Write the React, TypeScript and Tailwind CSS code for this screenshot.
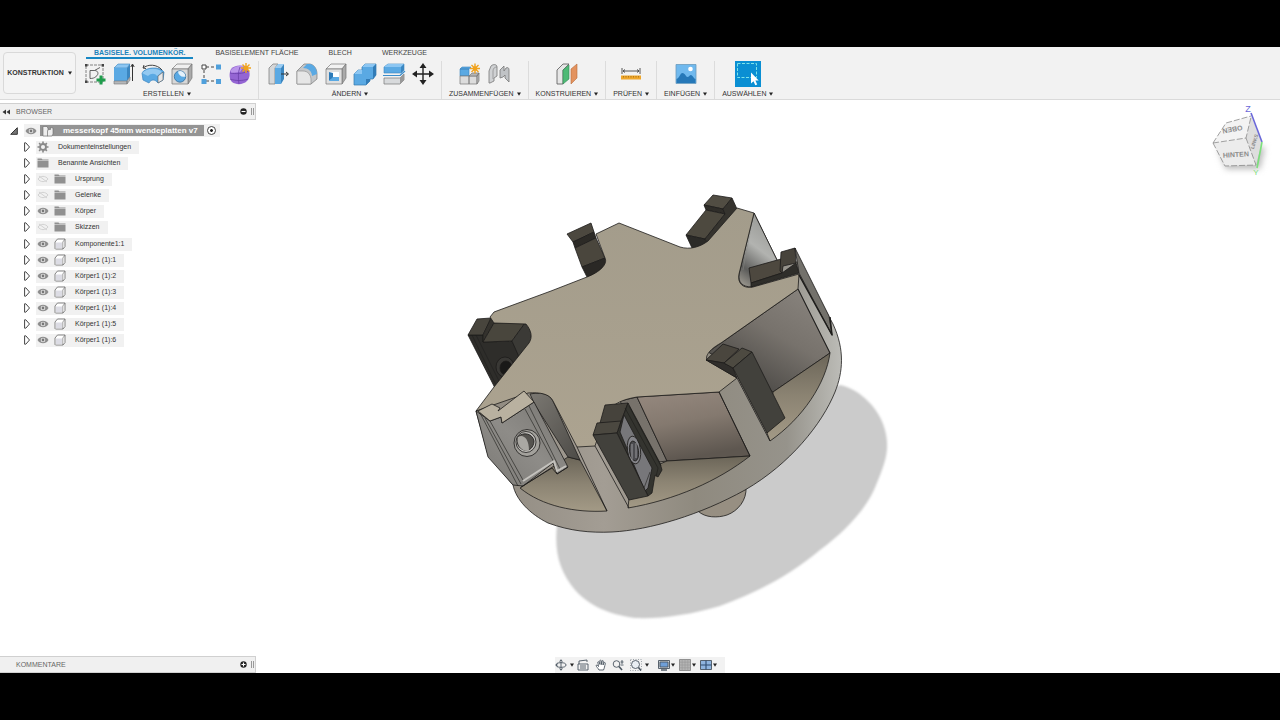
import type { ReactNode } from 'react';

interface ToolGroupProps {
  label: string;
  icons: { name: string; icon: ReactNode }[];
  first?: boolean;
}

type Facet = [points: string, fill: string];

const Caret = () => (
  <svg className="w-1 h-1 shrink-0" viewBox="0 0 4 4" fill="#222">
    <path d="M0 .4h4L2 3.8z" />
  </svg>
);

const Icon = ({ children }: { children: ReactNode }) => (
  <svg className="w-6 h-6" viewBox="0 0 24 24" fill="none" strokeLinejoin="round">
    {children}
  </svg>
);

const Spark = ({ x, y }: { x: number; y: number }) => (
  <g transform={`translate(${x} ${y})`} stroke="#f0a21c" strokeWidth="1.4">
    <path d="M0-5V5M-5 0H5M-3.5-3.5l7 7M3.5-3.5l-7 7" />
    <circle r="2.2" fill="#f0a21c" stroke="none" />
  </g>
);

const createTools = [
  {
    name: 'Skizze erstellen',
    icon: (
      <Icon>
        <path d="M3 3h17v17H3z" stroke="#666" strokeDasharray="3 1" strokeWidth=".8" />
        <path d="M7 16.500V8.500h4.500c4 0 4.500 4 1.500 6-1.500 1.500-3.500 2-6 2zM11.500 8.500L17 5.500" stroke="#555" strokeWidth=".9" />
        <path d="M2 2h2.500v2.500H2zM18.500 2H21v2.500h-2.500zM2 18.500h2.500V21H2z" fill="#444" />
        <path d="M18 13.500v9M13.500 18h9" stroke="#1f9d4c" strokeWidth="3" />
      </Icon>
    ),
  },
  {
    name: 'Extrusion',
    icon: (
      <Icon>
        <path d="M2 6l4-4h12l-3 4z" fill="#8cc6f2" stroke="#3b84be" strokeWidth=".6" />
        <path d="M2 6h13v13H2z" fill="#5aa9e3" />
        <path d="M15 6l3-4v13l-3 4z" fill="#3b86c0" />
        <path d="M2 19h13v3H2zM15 19l3-4v3l-3 4z" fill="#b5b7b9" stroke="#777" strokeWidth=".6" />
        <path d="M20.500 19V3M18.800 5l1.700-3 1.700 3" stroke="#333" />
      </Icon>
    ),
  },
  {
    name: 'Drehen',
    icon: (
      <Icon>
        <path d="M1 11c3-6 18-7 22-1l-1 8-5 3c-3-4-7-4-9 0l-6-3z" fill="#5aa9e3" stroke="#3b84be" strokeWidth=".7" />
        <path d="M1 11c5-5 15-6 20-1l-5 4c-2-3-6-3-9 0z" fill="#93c9f1" />
        <path d="M17 14l5-4v8l-5 3z" fill="#e8e8e8" stroke="#555" strokeWidth=".6" />
        <path d="M2 6c5-4 14-4 19 2M2 6l1-3M2 6l3 .5" stroke="#444" />
      </Icon>
    ),
  },
  {
    name: 'Bohrung',
    icon: (
      <Icon>
        <path d="M2 7l5-5h15l-4 5z" fill="#f0f0f0" stroke="#777" strokeWidth=".7" />
        <path d="M18 7l4-5v14l-4 6z" fill="#aaa" stroke="#777" strokeWidth=".7" />
        <path d="M2 7h16v15H2z" fill="#d8d8d8" stroke="#777" strokeWidth=".7" />
        <circle cx="10" cy="14.500" r="5.700" fill="#5aa9e3" stroke="#356f9d" strokeWidth=".8" />
        <path d="M8 9.500a5.500 5.500 0 0 1 7.500 5c-4 1-7-1-7.500-5z" fill="#e4f1fb" />
      </Icon>
    ),
  },
  {
    name: 'Muster',
    icon: (
      <Icon>
        <path d="M7 5h10M5 8v9M7 19h10" stroke="#444" strokeDasharray="3 2" />
        <path d="M3 3h4v4H3z" fill="#fff" stroke="#444" />
        <path d="M17 2.500h5v5h-5zM2.500 17h5v5h-5zM17 17h5v5h-5z" fill="#4fa0dc" />
      </Icon>
    ),
  },
  {
    name: 'Form erstellen',
    icon: (
      <Icon>
        <path d="M3 7c3-4 12-5 16-1 4 4 3 10 0 13-4 4-11 4-15 1-3-3-3-9-1-13z" fill="#9465d3" />
        <path d="M3 8c3-4 9-5 13-4l-4 6-9 1z" fill="#ba95ea" />
        <path d="M2 11c6 1 12 1 19-2M12 5c-2 5-2 11-1 17M2 17c6 2 12 2 18 0" stroke="#6a3fa8" strokeWidth=".8" />
        <Spark x={18} y={6} />
      </Icon>
    ),
  },
];

const modifyTools = [
  {
    name: 'Drücken/Ziehen',
    icon: (
      <Icon>
        <path d="M3 6l4-4h5L9 6v16H3z" fill="#d5d7d9" stroke="#777" strokeWidth=".7" />
        <path d="M9 6l3-4h6l-3 4z" fill="#9bcdf3" />
        <path d="M9 6h6v16H9z" fill="#5aa9e3" />
        <path d="M15 6l3-4v15l-3 5z" fill="#3b86c0" />
        <path d="M15 12h7M20 10l2.500 2-2.500 2" stroke="#333" />
      </Icon>
    ),
  },
  {
    name: 'Abrundung',
    icon: (
      <Icon>
        <path d="M2 9l7-7h6c5 1 7 6 7 10v5l-6 5H2z" fill="#c5c7c9" stroke="#777" strokeWidth=".7" />
        <path d="M2 9h6c5 0 8 4 8 9v4H2z" fill="#e6e6e6" stroke="#888" strokeWidth=".6" />
        <path d="M8 6l4-4h3c5 1 7 6 7 10l-5 2c0-5-4-8-9-8z" fill="#5aa9e3" />
      </Icon>
    ),
  },
  {
    name: 'Schale',
    icon: (
      <Icon>
        <path d="M2 7l5-5h15l-4 5z" fill="#f2f2f2" stroke="#777" strokeWidth=".7" />
        <path d="M18 7l4-5v14l-4 6z" fill="#aaa" stroke="#777" strokeWidth=".7" />
        <path d="M2 7h16v15H2z" fill="#e0e0e0" stroke="#777" strokeWidth=".7" />
        <path d="M5 10h10v9H5z" fill="#fff" />
        <path d="M5 10l4 1v5l-4 3z" fill="#2e7bb8" />
        <path d="M5 19l4-4h6v4z" fill="#5aa9e3" />
      </Icon>
    ),
  },
  {
    name: 'Kombinieren',
    icon: (
      <Icon>
        <path d="M9 5l3-3h11v11l-3 4h-3v2l-4 4H1V12l4-4h4z" fill="#5aa9e3" stroke="#3578ae" strokeWidth=".7" />
        <path d="M9 5h11l3-3H12zM1 12h8V8H5z" fill="#8cc6f2" />
        <path d="M20 5l3-3v11l-3 4zM13 17h4v2l-4 4z" fill="#327cb7" />
      </Icon>
    ),
  },
  {
    name: 'Körper teilen',
    icon: (
      <Icon>
        <path d="M2 5l4-3h16v6l-3 3H2z" fill="#5aa9e3" stroke="#3b84be" strokeWidth=".6" />
        <path d="M2 5h17l3-3H6z" fill="#8cc6f2" />
        <path d="M19 5l3-3v6l-3 3z" fill="#3b86c0" />
        <path d="M1 13.500h17l5-4.500" stroke="#3c8dca" strokeWidth="1.200" />
        <path d="M2 16h16l4-4v6l-4 4H2z" fill="#d8dadc" stroke="#777" strokeWidth=".7" />
        <path d="M18 16l4-4v6l-4 4z" fill="#999" />
      </Icon>
    ),
  },
  {
    name: 'Verschieben',
    icon: (
      <Icon>
        <path d="M12 3v18M3 12h18" stroke="#222" strokeWidth="1.400" />
        <path d="M12 1l3.500 5h-7zM12 23l-3.500-5h7zM1 12l5-3.500v7zM23 12l-5 3.500v-7z" fill="#222" />
      </Icon>
    ),
  },
];

const assembleTools = [
  {
    name: 'Neue Komponente',
    icon: (
      <Icon>
        <path d="M2 7l2-2h9l-2 2zM2 7h9v7H2z" fill="#5aa9e3" stroke="#3b84be" strokeWidth=".6" />
        <path d="M2 14h9v8H2zM11 14h8v8h-8z" fill="#dcdcdc" stroke="#777" strokeWidth=".7" />
        <path d="M11 14l3-3h7l-2 3zM19 14l2-3v8l-2 3z" fill="#b5b5b5" stroke="#777" strokeWidth=".7" />
        <Spark x={17} y={6.5} />
      </Icon>
    ),
  },
  {
    name: 'Gelenk',
    icon: (
      <Icon>
        <path d="M2 9l2-5c2-2 6-2 6 1v9l-3 2v3l-4 2H2z" fill="#d0d2d4" stroke="#777" strokeWidth=".8" />
        <path d="M6 9v8M6 9c0-3 2-4 4-4" stroke="#888" strokeWidth=".7" />
        <path d="M13 8l4-4v5l2-3c2-1 3 0 3 2v12l-4-4v-3l-2 2-3 1z" fill="#c0c3c6" stroke="#777" strokeWidth=".8" />
      </Icon>
    ),
  },
];

const constructTools = [
  {
    name: 'Versetzte Ebene',
    icon: (
      <Icon>
        <path d="M2 8l6-6h6L8 8v14H2z" fill="#e6e6e6" stroke="#555" strokeWidth=".8" />
        <path d="M8 8l6-5v14l-6 5z" fill="#4dba75" stroke="#338855" strokeWidth=".6" />
        <path d="M16 7l6-5v14l-6 6z" fill="#e3935f" stroke="#b96c3b" strokeWidth=".6" />
      </Icon>
    ),
  },
];

const inspectTools = [
  {
    name: 'Messen',
    icon: (
      <Icon>
        <path d="M3 6v6M21 6v6M4 9h16M6 7.500L4 9l2 1.500M18 7.500L20 9l-2 1.500" stroke="#444" strokeWidth=".9" />
        <path d="M2 13.500h20v4H2z" fill="#efa72b" />
        <path d="M4.500 14v1.500M7 14v1.500M9.500 14v1.500M12 14v1.500M14.500 14v1.500M17 14v1.500M19.500 14v1.500" stroke="#8c5b08" strokeWidth=".6" />
      </Icon>
    ),
  },
];

const insertTools = [
  {
    name: 'Bild einfügen',
    icon: (
      <Icon>
        <path d="M2 2.500h20v19H2z" fill="#70b9ee" stroke="#6b9abd" strokeWidth=".8" />
        <path d="M2.500 17c3-1 3.500-6 6-6s3.500 4 5 4 2-2 3.500-2 3 4 4.500 4v4h-19z" fill="#2678b8" />
        <circle cx="16.500" cy="7" r="2.300" fill="#fff" />
      </Icon>
    ),
  },
];

const selectTools = [
  {
    name: 'Auswahl',
    icon: (
      <svg className="w-[26px] h-[26px]" viewBox="0 0 26 26" fill="none">
        <path d="M0 0h26v26H0z" fill="#0a8fd3" />
        <path d="M2.500 2.500h19v14h-19z" stroke="#7ce3e8" strokeDasharray="3 1.500" />
        <path d="M16 11.500v11l2.500-2.200 1.800 4 1.900-.9-1.800-3.900h3.300z" fill="#fff" />
      </svg>
    ),
  },
];

function ToolGroup({ label, icons, first }: ToolGroupProps) {
  return (
    <div className={`flex flex-col items-center px-[7px] ${first ? '' : 'border-l border-[#dcdcdc]'}`}>
      <div className="flex -mx-[3px]">
        {icons.map(({ name, icon }) => (
          <button key={name} aria-label={name} className="w-[29px] h-[26px] flex items-center justify-center">
            {icon}
          </button>
        ))}
      </div>
      <button className="flex items-center gap-[3px] pt-0.5 leading-[10px] text-[#333]">
        {label}
        <Caret />
      </button>
    </div>
  );
}

function Toolbar() {
  const tabs = ['BASISELE. VOLUMENKÖR.', 'BASISELEMENT FLÄCHE', 'BLECH', 'WERKZEUGE'];
  return (
    <header className="h-[53px] shrink-0 flex bg-[#f2f2f2] border-b border-[#dadada] text-[7px]">
      <button className="w-[73px] h-[42px] mt-[5px] ml-[3px] shrink-0 flex items-center justify-center gap-1 rounded-sm border border-[#d9d9d9] bg-[#f4f4f4] font-bold text-[#333]">
        KONSTRUKTION
        <Caret />
      </button>
      <div className="flex flex-col">
        <nav className="flex gap-[14px] ml-[10px] h-3">
          {tabs.map((tab, i) => (
            <a
              key={tab}
              href="#"
              className={`px-2 h-3 leading-[11px] border-b-2 ${
                i === 0 ? 'border-[#1787c4] text-[#1b82bb] font-bold' : 'border-transparent text-[#444]'
              }`}
            >
              {tab}
            </a>
          ))}
        </nav>
        <div className="flex mt-0.5">
          <ToolGroup label="ERSTELLEN" icons={createTools} first />
          <ToolGroup label="ÄNDERN" icons={modifyTools} />
          <ToolGroup label="ZUSAMMENFÜGEN" icons={assembleTools} />
          <ToolGroup label="KONSTRUIEREN" icons={constructTools} />
          <ToolGroup label="PRÜFEN" icons={inspectTools} />
          <ToolGroup label="EINFÜGEN" icons={insertTools} />
          <ToolGroup label="AUSWÄHLEN" icons={selectTools} />
        </div>
      </div>
    </header>
  );
}

const Eye = ({ off }: { off?: boolean }) => (
  <svg className="w-3 h-3 shrink-0" viewBox="0 0 12 12" fill="none">
    {off ? (
      <path d="M1 6c2.500-3.500 7.500-3.500 10 0-2.500 3.500-7.500 3.500-10 0zM2 3l8 6" stroke="#d2d2d2" />
    ) : (
      <>
        <path d="M.5 6c2.500-4.300 8.500-4.300 11 0-2.500 4.300-8.500 4.300-11 0z" fill="#8d8d8d" />
        <circle cx="6" cy="6" r="2.300" fill="#e8e8e8" />
        <circle cx="6" cy="6" r="1.400" fill="#777" />
      </>
    )}
  </svg>
);

const Folder = () => (
  <svg className="w-3 h-3 shrink-0" viewBox="0 0 12 12" fill="#909090">
    <path d="M.5 1.500h4l1 1h6v1H.5zM.5 4h11v6.500H.5z" />
  </svg>
);

const Body = () => (
  <svg className="w-3 h-3 shrink-0" viewBox="0 0 12 12" fill="#fff" stroke="#777" strokeWidth=".9" strokeLinejoin="round">
    <path d="M1 4l2.500-3H11v7.500L9 11H1.500L1 10.500z" />
    <path d="M2 4.500h6v5.800H2z" fill="#dcdce4" stroke="none" />
    <path d="M8.800 11V4L11 1" fill="none" strokeWidth=".7" />
  </svg>
);

const Gear = () => (
  <svg className="w-3 h-3 shrink-0" viewBox="0 0 12 12" fill="none" stroke="#888">
    <circle cx="6" cy="6" r="3" strokeWidth="1.900" />
    <path d="M6 .5v2M6 9.500v2M.5 6h2M9.500 6h2M2.100 2.100l1.400 1.400M8.500 8.500l1.400 1.400M9.900 2.100L8.500 3.500M3.500 8.500L2.100 9.900" strokeWidth="1.600" />
  </svg>
);

function TreeRow({ label, icon, visible }: { label: string; icon: ReactNode; visible?: boolean }) {
  return (
    <li className="h-4 flex items-center pl-6">
      <button aria-label={`${label} öffnen`} className="w-3 shrink-0">
        <svg className="w-[6px] h-[10px]" viewBox="0 0 6 10" fill="#fff" stroke="#444">
          <path d="M.6 .8v8.400h1.200L5.500 5 1.800.8z" />
        </svg>
      </button>
      <div className="h-[13px] flex items-center bg-[#f1f1f1] pl-px pr-2">
        {visible !== undefined && (
          <button aria-label={`${label} ein- oder ausblenden`} className="mr-[5px]">
            <Eye off={!visible} />
          </button>
        )}
        {icon}
        <span className="ml-[9px] whitespace-nowrap">{label}</span>
      </div>
    </li>
  );
}

function PanelHeader({ title, collapsed }: { title: string; collapsed?: boolean }) {
  return (
    <div className="h-[17px] flex items-center bg-[#f0f0f0] border border-l-0 border-[#d0d0d0] text-[#666]">
      <span className="w-4 flex justify-start pl-0.5">
        {!collapsed && (
          <svg className="w-2 h-2" viewBox="0 0 8 8" fill="#333">
            <path d="M4 1.500v5L.5 4zM8 1.500v5L4.500 4z" />
          </svg>
        )}
      </span>
      <h2>{title}</h2>
      <button aria-label={`${title} umschalten`} className="ml-auto mr-1">
        <svg className="w-[7px] h-[7px]" viewBox="0 0 7 7">
          <circle cx="3.500" cy="3.500" r="3.200" fill="#222" />
          <path d={collapsed ? 'M1.500 3.500h4M3.500 1.500v4' : 'M1.500 3.500h4'} stroke="#fff" strokeWidth="1.100" />
        </svg>
      </button>
      <span className="w-[3px] h-[7px] mr-px border-l border-r border-[#999]" />
    </div>
  );
}

function BrowserPanel() {
  const bodies = [1, 2, 3, 4, 5, 6];
  return (
    <aside className="[grid-area:1/1] z-10 w-64 flex flex-col text-[7px] leading-[10px] text-[#333] pt-[3px]">
      <PanelHeader title="BROWSER" />
      <div className="h-[17px] mt-[2px] flex items-center pl-[10px]">
        <svg className="w-2 h-2 mr-[6px]" viewBox="0 0 8 8">
          <path d="M.7 7.300h6.600V.7z" fill="#777" stroke="#333" />
        </svg>
        <div className="h-[13px] flex items-center bg-[#f1f1f1] pl-px pr-1">
          <button aria-label="Alles ein- oder ausblenden">
            <Eye />
          </button>
          <div className="h-[11px] ml-[3px] pl-[2px] pr-[6px] flex items-center gap-[9px] bg-[#949494] text-white text-[8px] font-bold whitespace-nowrap">
            <svg className="w-3 h-3" viewBox="0 0 12 12" fill="#eee" stroke="#6a6a6a" strokeWidth=".6">
              <path d="M1 1.500h4l1 2V11H1z" />
              <path d="M5.500 6l1-1.500h2v-2l2.500.5v6L10 11H5.500z" />
            </svg>
            messerkopf 45mm wendeplatten v7
          </div>
          <input type="radio" name="active" aria-label="Komponente aktivieren" defaultChecked className="appearance-none w-[9px] h-[9px] ml-[3px] rounded-full border border-[#444] bg-[radial-gradient(#222_22%,#fff_34%)]" />
        </div>
      </div>
      <ul>
        <TreeRow label="Dokumenteinstellungen" icon={<Gear />} />
        <TreeRow label="Benannte Ansichten" icon={<Folder />} />
        <TreeRow label="Ursprung" icon={<Folder />} visible={false} />
        <TreeRow label="Gelenke" icon={<Folder />} visible={false} />
        <TreeRow label="Körper" icon={<Folder />} visible />
        <TreeRow label="Skizzen" icon={<Folder />} visible={false} />
      </ul>
      <ul className="mt-px">
        <TreeRow label="Komponente1:1" icon={<Body />} visible />
        {bodies.map((n) => (
          <TreeRow key={n} label={`Körper1 (1):${n}`} icon={<Body />} visible />
        ))}
      </ul>
      <div className="mt-auto">
        <PanelHeader title="KOMMENTARE" collapsed />
      </div>
    </aside>
  );
}

const Facets = ({ items }: { items: Facet[] }) => (
  <>
    {items.map(([points, fill]) => (
      <polygon key={points} points={points} fill={fill} />
    ))}
  </>
);

// inserts that sit behind the top face
const rearInserts: Facet[] = [
  ['567,234 591,223 594,232 573,242', '#4c483f'],
  ['573,242 594,232 596,238 575,248', '#2c2a26'],
  ['575,248 596,238 605,258 582,267', '#4a463d'],
  ['582,267 605,258 608,268 588,279', '#2a2825'],
  ['704,205 713,195 732,198 723,209', '#514d43'],
  ['704,205 723,209 725,214 706,210', '#2f2d29'],
  ['706,210 725,214 705,239 686,235', '#4d493f'],
  ['686,235 705,239 709,246 692,248', '#2b2a27'],
  ['723,209 732,198 737,209 709,246 705,239 725,214', '#35332e'],
];

const leftInsert: Facet[] = [
  ['468,335 483,335 483,342 512,341 520,356 496,390', '#2e2d2a'],
  ['468,335 477,319 491,318 483,335', '#48453d'],
  ['483,335 491,318 494,323 483,342', '#34322d'],
  ['483,342 494,323 525,323 512,341', '#49463d'],
  ['512,341 525,323 533,332 533,344 519,357', '#3b3a36'],
];

const rightInsert: Facet[] = [
  ['749,268 781,259 782,273 751,283', '#4d483f'],
  ['751,283 782,273 796,263 799,273 751,287', '#2f2e2a'],
  ['781,252 795,248 796,263 783,266 782,273 780,271', '#47433b'],
  ['795,248 829,316 832,335 799,273', '#73716b'],
];

const lowerRightInsert: Facet[] = [
  ['706,360 723,344 739,349 724,363', '#4a463e'],
  ['706,360 724,363 733,368 737,378', '#302e2b'],
  ['724,363 742,348 752,352 733,368', '#4d4a41'],
  ['733,368 752,352 785,418 767,433', '#42413c'],
];

const frontInsert: Facet[] = [
  ['605,405 628,403 620,424 600,423', '#46433c'],
  ['628,403 660,463 662,470 658,477 655,475 652,493 648,496 617,433', '#34342f'],
  ['624,415 652,468 648,488 645,491 620,432', '#77777a'],
  ['597,423 621,421 617,433 593,435', '#4b4840'],
  ['593,435 617,433 648,496 629,500', '#42413c'],
];

function Model() {
  return (
    <svg className="[grid-area:1/1] w-full h-full min-h-0" viewBox="0 100 1280 573" role="img" aria-label="Messerkopf">
      <defs>
        <filter id="soft" x="-5%" y="-5%" width="110%" height="110%">
          <feGaussianBlur stdDeviation="1" />
        </filter>
        <linearGradient id="top" x1="0" y1="0" x2="0" y2="1">
          <stop offset="0" stopColor="#a39c8b" />
          <stop offset="1" stopColor="#aca390" />
        </linearGradient>
        <linearGradient id="side" x1="0" y1="0" x2="1" y2="0">
          <stop offset="0" stopColor="#8f897f" />
          <stop offset=".35" stopColor="#a39d94" />
          <stop offset=".6" stopColor="#8f8a7f" />
          <stop offset=".85" stopColor="#96938b" />
          <stop offset="1" stopColor="#bcbcb7" />
        </linearGradient>
        <linearGradient id="wallA" x1="0" y1="0" x2=".3" y2="1">
          <stop offset="0" stopColor="#96897f" />
          <stop offset=".5" stopColor="#84796f" />
          <stop offset="1" stopColor="#5e5750" />
        </linearGradient>
        <linearGradient id="wallB" x1="1" y1="0" x2=".3" y2="1">
          <stop offset="0" stopColor="#8c8781" />
          <stop offset=".5" stopColor="#77726c" />
          <stop offset="1" stopColor="#474542" />
        </linearGradient>
        <linearGradient id="wallC" x1=".6" y1="0" x2=".2" y2="1">
          <stop offset="0" stopColor="#969793" />
          <stop offset=".45" stopColor="#b2b3b0" />
          <stop offset=".8" stopColor="#5d5d5b" />
          <stop offset="1" stopColor="#96938b" />
        </linearGradient>
        <linearGradient id="wallD" x1="0" y1="0" x2="1" y2="1">
          <stop offset="0" stopColor="#7b7872" />
          <stop offset="1" stopColor="#4d4b47" />
        </linearGradient>
        <linearGradient id="floor" x1="0" y1="0" x2="0" y2="1">
          <stop offset="0" stopColor="#6b6558" />
          <stop offset=".5" stopColor="#8c8473" />
          <stop offset="1" stopColor="#a39a86" />
        </linearGradient>
        <linearGradient id="plate" x1="0" y1="1" x2="1" y2="0">
          <stop offset="0" stopColor="#7a7874" />
          <stop offset=".5" stopColor="#8e8c88" />
          <stop offset="1" stopColor="#777571" />
        </linearGradient>
      </defs>

      <path
        d="M840 385C862 390 880 410 885 430C890 450 886 462 874 490C864 512 842 534 820 550C790 575 762 590 720 606C690 615 660 619 635 618C607 614 590 606 575 590C560 572 554 553 557 525L700 440z"
        fill="#cbcbcb"
        filter="url(#soft)"
      />

      <g stroke="#1d1c1a" strokeWidth=".8" strokeLinejoin="round">
        <path d="M698 511C705 518 718 518 727 515C738 511 747 500 746 487z" fill="#978f82" />
        <path
          d="M476 411L488 455L513 485C516 500 530 514 548 523C570 531 590 533 612 532C650 530 700 515 745 490C790 464 822 424 835 392C843 372 845 350 833 324L799 262L778 262L754 213L640 300z"
          fill="url(#side)"
        />

        <path d="M754 213L778 262L752 287C742 287 738 282 739 274z" fill="url(#wallC)" />
        <path d="M753 216L743 270" fill="none" stroke="#8a8a87" strokeWidth=".5" />
        <Facets items={rearInserts} />
        <Facets items={leftInsert} />
        <path d="M472 335l24 50M476 335l23 46" fill="none" strokeWidth=".5" />
        <ellipse cx="505" cy="367" rx="9" ry="10" fill="#393835" />
        <ellipse cx="506" cy="368" rx="6" ry="7" fill="#191918" />

        <path d="M520 488L568 457L580 460L607 511C575 513 542 506 520 488z" fill="url(#floor)" />
        <path d="M530 394C545 391 550 396 553 401L580 460L568 457L535 405z" fill="url(#wallD)" />

        <path d="M620 401L637 397L667 461L650 463z" fill="#77726b" />
        <path d="M637 397L719 392L750 456L667 461z" fill="url(#wallA)" />
        <path d="M628 508L629 498L660 464L667 461L750 456C718 481 675 500 628 508z" fill="url(#floor)" />

        <path d="M708 352L721 343L798 289L830 353L773 392L740 370z" fill="url(#wallB)" />
        <path d="M773 392L830 353C826 383 803 418 770 441L767 433z" fill="url(#floor)" />
        <path d="M798 289L830 353M719 392L750 456M737 378L770 441M577 447L607 511M595 446L629 508" fill="none" />

        <path
          d="M494 312L551 291L587 277C600 272 608 264 605 258L596 234L619 223L680 247C690 250 700 247 708 241L737 208L754 213L739 274C737 283 743 289 753 287L799 274L798 289L721 343C708 350 704 358 708 361L737 378L719 392L637 397C620 400 607 405 602 425L595 446L577 447L553 401C550 394 540 392 528 393L476 411L494 387L529 343C533 337 531 330 526 324L494 323L490 317z"
          fill="url(#top)"
        />

        <Facets items={rightInsert} />
        <path d="M799 275L832 335L830 317" fill="none" strokeWidth="1.500" />
        <Facets items={lowerRightInsert} />

        <path d="M476 411L490 421L501 417L502 423L534 402L568 467L557 474L553 463L523 486L513 485L488 457z" fill="url(#plate)" />
        <path d="M478 411L492 404L500 408L498 411L524 391L534 402L502 423L501 417L490 421z" fill="#b9b1a0" />
        <path d="M480 413L518 486M485 418L521 484M490 421L523 480M529 406L560 469M525 409L556 466" fill="none" strokeWidth=".6" />
        <path d="M523 481L554 461L557 471L566 466" fill="none" stroke="#c4c2bd" strokeWidth="2" />
        <path d="M521 487L552 468L557 474L568 467" fill="none" strokeWidth=".8" />
        <ellipse cx="527" cy="443" rx="13" ry="13.500" fill="#a3a19c" />
        <ellipse cx="526" cy="442" rx="10" ry="10.500" fill="#c0beba" />
        <path d="M518 437C523 431 533 434 534 441C534 447 529 452 524 450C518 448 516 443 518 437z" fill="#55534f" />
        <path d="M518 437C523 434 529 438 529 451C521 452 516 444 518 437z" fill="#aaa8a3" stroke="none" />

        <Facets items={frontInsert} />
        <path d="M625 408L658 468L656 477M629 406L661 466M644 488L650 472" fill="none" strokeWidth=".6" />
        <ellipse cx="634" cy="450" rx="6.500" ry="14" fill="#85858a" transform="rotate(-8 634 450)" />
        <ellipse cx="634" cy="451" rx="4.500" ry="10" fill="#4c4c50" transform="rotate(-8 634 451)" />
        <path d="M632 444v16M636 443v15" stroke="#a2a2a4" strokeWidth=".9" />
      </g>
    </svg>
  );
}

function ViewCube() {
  return (
    <svg
      className="[grid-area:1/1] z-10 justify-self-end self-start w-[70px] h-20 mt-px mr-1"
      viewBox="1206 102 70 80"
      fontFamily="Liberation Sans, sans-serif"
      textAnchor="middle"
    >
      <defs>
        <filter id="cubeShadow" x="-30%" y="-30%" width="160%" height="160%">
          <feGaussianBlur stdDeviation="3" />
        </filter>
      </defs>
      <path d="M1218 150l8 20 34 0 5-22z" fill="#bbb" filter="url(#cubeShadow)" />
      <path d="M1213 144L1226 124L1251 117L1246 139z" fill="#f3f3f3" />
      <path d="M1213 144L1246 139L1256 166L1225 167z" fill="#ececec" />
      <path d="M1246 139L1251 117L1262 143L1256 166z" fill="#dedede" />
      <path d="M1213 144L1226 124L1251 117M1213 144L1246 139L1251 118M1213 144L1225 167L1256 166M1246 139L1256 166" fill="none" stroke="#8a8a8a" strokeWidth=".8" strokeDasharray="6 2" />
      <path d="M1251 114L1262 143" stroke="#6a68d8" strokeWidth="1.600" />
      <path d="M1262 143L1257 169" stroke="#7be07b" strokeWidth="1.600" />
      <text x="1248" y="113" fontSize="9" fill="#6a68d8">Z</text>
      <text x="1256" y="176" fontSize="8" fill="#7be07b">Y</text>
      <text fontSize="7" fontWeight="bold" fill="#8b8b8b" transform="translate(1236 158) rotate(-3)">HINTEN</text>
      <text fontSize="7" fontWeight="bold" fill="#8b8b8b" transform="translate(1232 128) rotate(170)">OBEN</text>
      <text fontSize="5" fontWeight="bold" fill="#8b8b8b" transform="translate(1256 143) rotate(-72)">LINKS</text>
    </svg>
  );
}

const NavIcon = ({ children }: { children: ReactNode }) => (
  <svg className="w-3 h-3" viewBox="0 0 12 12" fill="none" stroke="#4a5560" strokeWidth=".9" strokeLinejoin="round">
    {children}
  </svg>
);

const Screen = () => (
  <NavIcon>
    <path d="M.5 1.500h11v8H.5z" fill="#ccd3da" />
    <path d="M2 3h8v5H2z" fill="#6f9fd8" />
    <path d="M3 11h6" strokeWidth="1.400" />
  </NavIcon>
);

function NavBar() {
  return (
    <nav className="[grid-area:1/1] z-10 justify-self-center self-end h-4 w-[170px] flex items-center bg-[#f2f2f2]">
      <button aria-label="Orbit" className="flex items-center gap-[3px] mr-[3px]">
        <NavIcon>
          <ellipse cx="6" cy="6" rx="5" ry="2.300" />
          <path d="M6 .8v10.400M4.500 2.500L6 .8l1.500 1.700M4.500 9.500L6 11.200l1.500-1.700M3 4.500L1 6l2 1.500" />
        </NavIcon>
        <Caret />
      </button>
      <button aria-label="Ansicht von" className="mr-[6px]">
        <NavIcon>
          <path d="M1 5h10v6H1zM2 5V2l8-1v2M3 7h6M3 9h6" />
        </NavIcon>
      </button>
      <button aria-label="Pan" className="mr-[5px]">
        <NavIcon>
          <path d="M4 11C3 9 1.500 8 1 6.500c1-.8 2 .3 2.500 1L2.800 3c.8-.8 1.400 0 1.600.8L5 5.500l-.2-4c.7-.8 1.400 0 1.400.5l.3 3.500.7-3.800c.8-.4 1.300.2 1.200 1L8 6l1.300-2.500c.8-.2 1.200.5 1 1.200C9.500 7.500 9.500 9 8.500 11z" fill="#fff" />
        </NavIcon>
      </button>
      <button aria-label="Zoom" className="mr-[6px]">
        <NavIcon>
          <circle cx="4.500" cy="5" r="3.300" />
          <path d="M7 7.500l3 3.500" strokeWidth="1.600" />
          <path d="M10 1v4M8.500 3h3M8.500 6h3" />
        </NavIcon>
      </button>
      <button aria-label="Zoomfenster" className="flex items-center gap-[3px] mr-[9px]">
        <NavIcon>
          <path d="M.5 .5h11v11H.5z" strokeDasharray="1 1.500" strokeWidth=".5" />
          <circle cx="5.500" cy="5.500" r="4" fill="#e9eef3" />
          <path d="M8.500 8.500l2.500 3" strokeWidth="1.600" />
        </NavIcon>
        <Caret />
      </button>
      <button aria-label="Anzeigeeinstellungen" className="flex items-center gap-px mr-1">
        <Screen />
        <Caret />
      </button>
      <button aria-label="Raster" className="flex items-center gap-px mr-1">
        <NavIcon>
          <path d="M.5 .5h11v11H.5z" fill="#b4b4b4" stroke="#888" />
          <path d="M3.200.5v11M6 .5v11M8.800.5v11M.5 3.200h11M.5 6h11M.5 8.800h11" stroke="#999" strokeWidth=".6" />
        </NavIcon>
        <Caret />
      </button>
      <button aria-label="Ansichtsfenster" className="flex items-center gap-px">
        <NavIcon>
          <path d="M.5 1.500h11v9H.5z" fill="#8fb4de" />
          <path d="M6 1.500v9M.5 6h11" stroke="#2f4d70" strokeWidth="1.100" />
        </NavIcon>
        <Caret />
      </button>
    </nav>
  );
}

export default function App() {
  return (
    <div className="min-h-screen flex flex-col bg-black py-[47px] font-['Liberation_Sans',Arial,sans-serif]">
      <Toolbar />
      <main className="flex-1 grid grid-cols-1 bg-white">
        <Model />
        <BrowserPanel />
        <ViewCube />
        <NavBar />
      </main>
    </div>
  );
}
